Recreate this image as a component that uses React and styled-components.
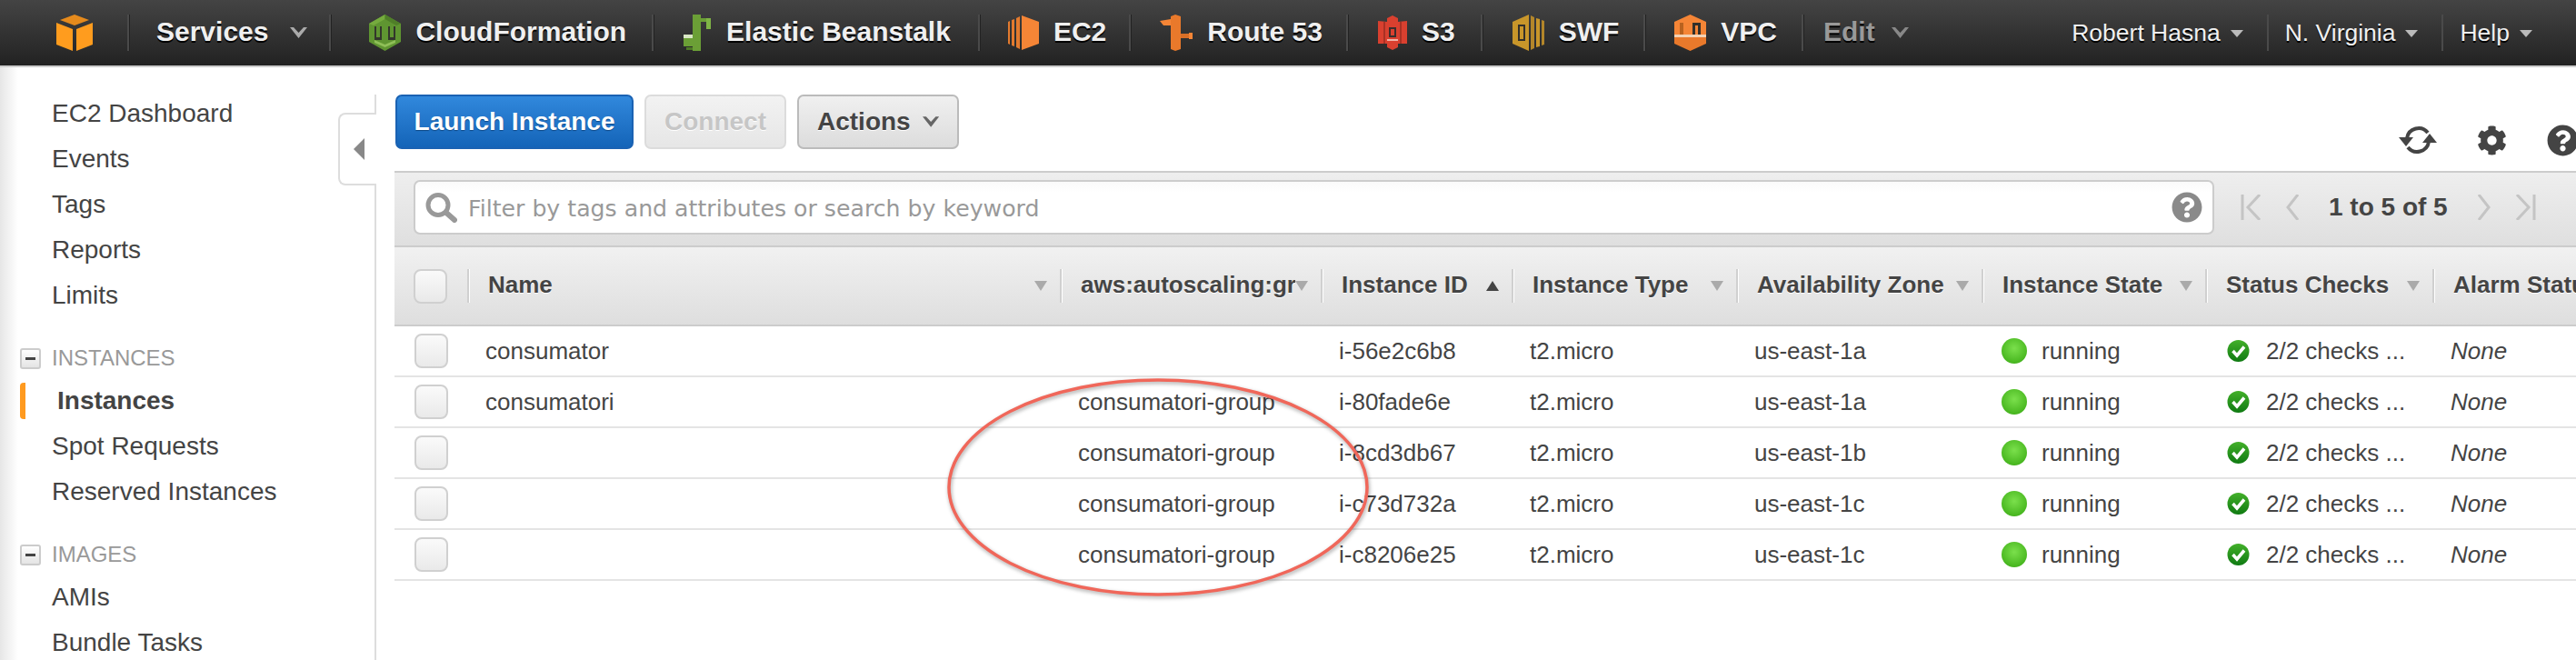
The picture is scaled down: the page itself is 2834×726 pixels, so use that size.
import React from 'react';
import styled, { createGlobalStyle } from 'styled-components';
import { FaCog, FaQuestionCircle } from 'react-icons/fa';

const GlobalStyle = createGlobalStyle`
  html, body {
    margin: 0;
    padding: 0;
    height: 100%;
    overflow: hidden;
    background: #fff;
  }
  body {
    font-family: "Liberation Sans", Arial, sans-serif;
    color: #444;
  }
`;

const rows = [
  { name: 'consumator', group: '', id: 'i-56e2c6b8', zone: 'us-east-1a' },
  { name: 'consumatori', group: 'consumatori-group', id: 'i-80fade6e', zone: 'us-east-1a' },
  { name: '', group: 'consumatori-group', id: 'i-8cd3db67', zone: 'us-east-1b' },
  { name: '', group: 'consumatori-group', id: 'i-c73d732a', zone: 'us-east-1c' },
  { name: '', group: 'consumatori-group', id: 'i-c8206e25', zone: 'us-east-1c' }
];

const columns = [
  { label: 'Name' },
  { label: 'aws:autoscaling:group' },
  { label: 'Instance ID', sorted: true },
  { label: 'Instance Type' },
  { label: 'Availability Zone' },
  { label: 'Instance State' },
  { label: 'Status Checks' },
  { label: 'Alarm Status' }
];

const COLUMNS = '80px 652px 287px 210px 247px 270px 246px 250px 300px';

/* Service icons */
const AwsLogo = () => (
  <svg width="40" height="40" viewBox="0 0 40 40">
    <polygon points="20,0 36,6 20,12 4,6" fill="#e58a1c" />
    <polygon points="0,9 18,16 18,40 0,33" fill="#ff9c1e" />
    <polygon points="40,9 22,16 22,40 40,33" fill="#ff9c1e" />
  </svg>
);

const CloudFormationIcon = () => (
  <svg width="35" height="40" viewBox="0 0 35 40">
    <polygon points="17.5,0 35,10 35,30 17.5,40 0,30 0,10" fill="#5f9531" />
    <polygon points="17.5,0 17.5,5 5,12 0,10" fill="#75ab3e" />
    <polygon points="17.5,0 17.5,5 30,12 35,10" fill="#4f7f28" />
    <rect x="6" y="13" width="8" height="15" fill="#33372c" />
    <rect x="21" y="13" width="8" height="15" fill="#33372c" />
    <rect x="8" y="13" width="4" height="12" fill="#5f9531" />
    <rect x="23" y="13" width="4" height="12" fill="#5f9531" />
    <polygon points="6,28 17.5,33 29,28 29,31 17.5,36 6,31" fill="#8fbf58" />
  </svg>
);

const BeanstalkIcon = () => (
  <svg width="32" height="40" viewBox="0 0 32 40">
    <rect x="11" y="0" width="9" height="40" fill="#6b9f36" />
    <rect x="20" y="4" width="6" height="4" fill="#6b9f36" />
    <rect x="26" y="4" width="5" height="12" fill="#7fb446" />
    <rect x="1" y="22" width="10" height="5" fill="#d8e6c4" />
    <rect x="1" y="26" width="10" height="9" fill="#6b9f36" />
    <rect x="4" y="36" width="7" height="3" fill="#4e7a26" />
  </svg>
);

const Ec2Icon = () => (
  <svg width="34" height="38" viewBox="0 0 34 38">
    <polygon points="15,0 34,7 34,31 15,38" fill="#f58536" />
    <polygon points="9,3 13,1 13,37 9,35" fill="#e37a2e" />
    <polygon points="4,5 7,4 7,34 4,33" fill="#e37a2e" />
    <polygon points="0,7 2,6 2,32 0,31" fill="#e37a2e" />
  </svg>
);

const Route53Icon = () => (
  <svg width="36" height="40" viewBox="0 0 36 40">
    <polygon points="0,7 12,5 12,12 4,12" fill="#f58536" />
    <polygon points="12,2 17,0 23,2 23,38 17,40 12,38" fill="#e9792b" />
    <rect x="23" y="21" width="12" height="5" fill="#d86f27" />
    <rect x="32" y="20" width="4" height="7" fill="#f58536" />
  </svg>
);

const S3Icon = () => (
  <svg width="32" height="38" viewBox="0 0 32 38">
    <polygon points="16,0 22,3 22,7 32,6 32,31 22,31 22,35 16,38 10,35 10,31 0,31 0,6 10,7 10,3" fill="#d9402f" />
    <rect x="12" y="13" width="8" height="11" fill="#3a2e2c" />
    <rect x="14" y="15" width="4" height="7" fill="#d9402f" />
    <rect x="10" y="26" width="12" height="2" fill="#f0b3a8" />
    <rect x="6" y="7" width="2" height="24" fill="#a93124" />
    <rect x="24" y="7" width="2" height="24" fill="#a93124" />
  </svg>
);

const SwfIcon = () => (
  <svg width="35" height="40" viewBox="0 0 35 40">
    <polygon points="0,8 18,0 18,40 0,32" fill="#c8962a" />
    <rect x="6" y="11" width="8" height="18" fill="#33302a" />
    <rect x="8" y="13" width="4" height="14" fill="#c8962a" />
    <polygon points="20,1 24,3 24,37 20,39" fill="#b3862a" />
    <polygon points="26,4 30,5 30,35 26,36" fill="#c8962a" />
    <polygon points="32,6 35,7 35,33 32,34" fill="#b3862a" />
  </svg>
);

const VpcIcon = () => (
  <svg width="35" height="40" viewBox="0 0 35 40">
    <polygon points="17.5,0 35,8 35,22 0,22 0,8" fill="#f58536" />
    <rect x="6" y="9" width="4" height="13" fill="#b9621f" />
    <rect x="20" y="9" width="9" height="13" fill="#33302a" />
    <rect x="23" y="12" width="3" height="10" fill="#f58536" />
    <rect x="0" y="22" width="35" height="3" fill="#f3d2b4" />
    <polygon points="0,25 35,25 35,32 17.5,40 0,32" fill="#e9792b" />
  </svg>
);

const RefreshIcon = () => (
  <svg width="42" height="36" viewBox="0 0 42 36" fill="none">
    <path d="M9 16 A13 13 0 0 1 32 10" stroke="#444" strokeWidth="4" />
    <path d="M33 20 A13 13 0 0 1 10 26" stroke="#444" strokeWidth="4" />
    <polygon points="0,15 16,15 8,25" fill="#444" />
    <polygon points="26,21 42,21 34,11" fill="#444" />
  </svg>
);

const SearchIcon = () => (
  <svg width="35" height="33" viewBox="0 0 35 33" fill="none">
    <circle cx="14" cy="13.5" r="11" stroke="#999" strokeWidth="5" />
    <path d="M23 22 L32 30" stroke="#999" strokeWidth="6" strokeLinecap="round" />
  </svg>
);

const CheckBadge = () => (
  <svg width="25" height="24" viewBox="0 0 25 24">
    <defs>
      <linearGradient id="badge" x1="0" y1="0" x2="0" y2="1">
        <stop offset="0" stopColor="#43b02a" />
        <stop offset="1" stopColor="#0f7a12" />
      </linearGradient>
    </defs>
    <circle cx="12.5" cy="12" r="12" fill="url(#badge)" />
    <path d="M6.5 12 L11 17 L19 7.5" fill="none" stroke="#fff" strokeWidth="3.5" />
  </svg>
);

const PagerIcon = ({ d, width }) => (
  <svg width={width} height="28" viewBox={`0 0 ${width} 28`} fill="none">
    <path d={d} stroke="#c4c4c4" strokeWidth="3" />
  </svg>
);

const ChevronDown = ({ color }) => (
  <svg width="19" height="12" viewBox="0 0 19 12">
    <polygon points="0,0 4,0 9.5,6 15,0 19,0 9.5,12" fill={color} />
  </svg>
);

const App = () => (
  <>
    <GlobalStyle />
    <Page>
      <TopNav>
        <LogoItem>
          <AwsLogo />
        </LogoItem>
        <NavItem $left={30} $right={24} $gap={24}>
          <NavLabel>Services</NavLabel>
          <ChevronDown color="#aaa" />
        </NavItem>
        <NavItem $left={42} $right={28}>
          <CloudFormationIcon />
          <NavLabel>CloudFormation</NavLabel>
        </NavItem>
        <NavItem $left={32} $right={30}>
          <BeanstalkIcon />
          <NavLabel>Elastic Beanstalk</NavLabel>
        </NavItem>
        <NavItem $left={31} $right={25}>
          <Ec2Icon />
          <NavLabel>EC2</NavLabel>
        </NavItem>
        <NavItem $left={32} $right={26}>
          <Route53Icon />
          <NavLabel>Route 53</NavLabel>
        </NavItem>
        <NavItem $left={33} $right={28}>
          <S3Icon />
          <NavLabel>S3</NavLabel>
        </NavItem>
        <NavItem $left={33} $right={27}>
          <SwfIcon />
          <NavLabel>SWF</NavLabel>
        </NavItem>
        <NavItem $left={32} $right={27}>
          <VpcIcon />
          <NavLabel>VPC</NavLabel>
        </NavItem>
        <NavItem $left={22} $right={0} $gap={18}>
          <NavLabel $muted>Edit</NavLabel>
          <ChevronDown color="#888" />
        </NavItem>
        <UserMenu>
          <UserItem $plain>
            Robert Hasna
            <SmallCaret />
          </UserItem>
          <UserItem>
            N. Virginia
            <SmallCaret />
          </UserItem>
          <UserItem>
            Help
            <SmallCaret />
          </UserItem>
        </UserMenu>
      </TopNav>

      <Body>
        <Sidebar>
          <SideLink>EC2 Dashboard</SideLink>
          <SideLink>Events</SideLink>
          <SideLink>Tags</SideLink>
          <SideLink>Reports</SideLink>
          <SideLink>Limits</SideLink>
          <SideSection>
            <MinusBox />
            INSTANCES
          </SideSection>
          <SideLink $active>Instances</SideLink>
          <SideLink>Spot Requests</SideLink>
          <SideLink>Reserved Instances</SideLink>
          <SideSection>
            <MinusBox />
            IMAGES
          </SideSection>
          <SideLink>AMIs</SideLink>
          <SideLink>Bundle Tasks</SideLink>
          <CollapseTab>
            <CollapseArrow />
          </CollapseTab>
        </Sidebar>

        <Main>
          <ActionBar>
            <LaunchButton>Launch Instance</LaunchButton>
            <ConnectButton>Connect</ConnectButton>
            <ActionsButton>
              Actions
              <ChevronDown color="#666" />
            </ActionsButton>
            <ToolIcons>
              <RefreshIcon />
              <FaCog size={33} color="#444" />
              <FaQuestionCircle size={35} color="#444" />
            </ToolIcons>
          </ActionBar>

          <FilterBand>
            <FilterBox>
              <SearchIcon />
              <FilterText>Filter by tags and attributes or search by keyword</FilterText>
              <FaQuestionCircle size={34} color="#8a8a8a" />
            </FilterBox>
            <Pager>
              <PagerIcon width={22} d="M2 0 V28 M21 0 L8 14 L21 28" />
              <PagerGap />
              <PagerIcon width={14} d="M13 0 L2 14 L13 28" />
              <PagerCount>1 to 5 of 5</PagerCount>
              <PagerIcon width={14} d="M1 0 L12 14 L1 28" />
              <PagerGap />
              <PagerIcon width={22} d="M1 0 L14 14 L1 28 M20 0 V28" />
            </Pager>
          </FilterBand>

          <HeaderRow>
            <HeaderCheckCell>
              <CheckBox />
            </HeaderCheckCell>
            {columns.map(col => (
              <HeaderCell key={col.label}>
                <HeaderLabel>{col.label}</HeaderLabel>
                {col.sorted ? <SortUp /> : <HeaderCaret />}
              </HeaderCell>
            ))}
          </HeaderRow>

          {rows.map(row => (
            <Row key={row.id}>
              <CheckCell>
                <CheckBox />
              </CheckCell>
              <Cell>{row.name}</Cell>
              <Cell>{row.group}</Cell>
              <Cell>{row.id}</Cell>
              <Cell>t2.micro</Cell>
              <Cell>{row.zone}</Cell>
              <StateCell>
                <StatusDot />
                running
              </StateCell>
              <ChecksCell>
                <CheckBadge />
                2/2 checks ...
              </ChecksCell>
              <AlarmCell>None</AlarmCell>
            </Row>
          ))}

          <Annotation width="464" height="244" viewBox="0 0 464 244">
            <ellipse cx="232" cy="121" rx="230" ry="118" fill="none" stroke="#f0675a" strokeWidth="3.5" />
          </Annotation>
        </Main>
      </Body>
    </Page>
  </>
);

export default App;

const Page = styled.div`
  width: 2834px;
  height: 726px;
  overflow: hidden;
  display: flex;
  flex-direction: column;
`;

const TopNav = styled.nav`
  flex: none;
  height: 72px;
  display: flex;
  align-items: center;
  background: linear-gradient(#444, #222);
  border-bottom: 2px solid #ccc;
`;

const LogoItem = styled.div`
  width: 78px;
  padding-left: 62px;
  height: 40px;
  display: flex;
`;

const NavItem = styled.div`
  height: 40px;
  display: flex;
  align-items: center;
  gap: ${props => props.$gap || 16}px;
  padding: 0 ${props => props.$right}px 0 ${props => props.$left}px;
  border-left: 2px solid #4a4a4a;
  box-shadow: inset 1px 0 0 #222;
`;

const NavLabel = styled.span`
  margin-top: -2px;
  font-size: 30px;
  font-weight: bold;
  color: ${props => (props.$muted ? '#999' : '#f0f0f0')};
  text-shadow: 0 2px 0 #000;
`;

const UserMenu = styled.div`
  margin-left: auto;
  display: flex;
  padding-right: 48px;
`;

const UserItem = styled.div`
  height: 40px;
  display: flex;
  align-items: center;
  gap: 11px;
  padding: 0 26px 0 18px;
  font-size: 26.5px;
  color: #f0f0f0;
  text-shadow: 0 2px 0 #000;
  border-left: ${props => (props.$plain ? 'none' : '2px solid #4a4a4a')};

  &:last-child {
    padding-right: 0;
  }
`;

const SmallCaret = styled.span`
  width: 0;
  height: 0;
  border-left: 7px solid transparent;
  border-right: 7px solid transparent;
  border-top: 8px solid #bbb;
  margin-top: 2px;
`;

const Body = styled.div`
  flex: 1;
  display: flex;
  min-height: 0;
`;

const Sidebar = styled.aside`
  position: relative;
  flex: none;
  width: 414px;
  box-sizing: border-box;
  padding-top: 26px;
  background: linear-gradient(90deg, #e6e6e6, #fff 20px);

  &::after {
    content: '';
    position: absolute;
    top: 30px;
    bottom: 0;
    right: 0;
    width: 2px;
    background: #ddd;
  }
`;

const SideLink = styled.div`
  height: 50px;
  line-height: 50px;
  font-size: 28px;
  white-space: nowrap;
  color: #444;
  padding-left: ${props => (props.$active ? '35px' : '57px')};
  margin-left: ${props => (props.$active ? '22px' : '0')};
  font-weight: ${props => (props.$active ? 'bold' : 'normal')};
  border-left: ${props => (props.$active ? '6px solid #ff9a1f' : 'none')};
  border-radius: ${props => (props.$active ? '4px 0 0 4px' : '0')};
  ${props => props.$active && 'box-sizing: border-box; height: 40px; line-height: 40px; margin-top: 5px; margin-bottom: 5px;'}
`;

const SideSection = styled.div`
  height: 44px;
  margin-top: 22px;
  padding-left: 22px;
  display: flex;
  align-items: center;
  gap: 12px;
  font-size: 24px;
  color: #999;
`;

const MinusBox = styled.span`
  position: relative;
  width: 23px;
  height: 23px;
  box-sizing: border-box;
  border: 2px solid #ccc;
  border-radius: 3px;
  background: linear-gradient(#fff, #e4e4e4);

  &::after {
    content: '';
    position: absolute;
    left: 4px;
    right: 4px;
    top: 8px;
    height: 3px;
    background: #444;
  }
`;

const CollapseTab = styled.div`
  position: absolute;
  z-index: 1;
  top: 50px;
  right: 0;
  width: 42px;
  height: 80px;
  box-sizing: border-box;
  display: flex;
  align-items: center;
  padding-left: 15px;
  background: #fff;
  border: 2px solid #ddd;
  border-right: none;
  border-radius: 8px 0 0 8px;
`;

const CollapseArrow = styled.span`
  width: 0;
  height: 0;
  border-top: 12px solid transparent;
  border-bottom: 12px solid transparent;
  border-right: 12px solid #888;
`;

const Main = styled.main`
  position: relative;
  flex: 1;
  min-width: 0;
  padding-left: 20px;
`;

const ActionBar = styled.div`
  height: 114px;
  box-sizing: border-box;
  padding: 30px 0 0 1px;
  display: flex;
  align-items: flex-start;
  gap: 12px;
`;

const BaseButton = styled.button`
  height: 60px;
  box-sizing: border-box;
  border-radius: 7px;
  border: 2px solid #bbb;
  font-family: inherit;
  font-size: 28px;
  font-weight: bold;
  display: flex;
  align-items: center;
`;

const LaunchButton = styled(BaseButton)`
  width: 262px;
  justify-content: center;
  color: #fff;
  border-color: #1a62b3;
  background: linear-gradient(#3188dc, #1464b8);
  text-shadow: 0 1px 1px #0c4684;
`;

const ConnectButton = styled(BaseButton)`
  width: 156px;
  justify-content: center;
  color: #c6c6c6;
  border-color: #dcdcdc;
  background: linear-gradient(#f2f2f2, #e6e6e6);
  text-shadow: 0 1px 0 #fff;
`;

const ActionsButton = styled(BaseButton)`
  width: 178px;
  padding: 0 20px;
  gap: 13px;
  color: #444;
  background: linear-gradient(#f0f0f0, #dcdcdc);
  text-shadow: 0 1px 0 #fff;
`;

const ToolIcons = styled.div`
  flex: none;
  margin-left: auto;
  margin-top: 32px;
  margin-right: -3px;
  display: flex;
  align-items: center;
  gap: 44px;
`;

const FilterBand = styled.div`
  height: 84px;
  box-sizing: border-box;
  padding: 8px 0 0 21px;
  display: flex;
  background: linear-gradient(#eee, #dfdfdf);
  border-top: 2px solid #ccc;
  border-bottom: 2px solid #ccc;
`;

const FilterBox = styled.div`
  flex: none;
  width: 1981px;
  height: 60px;
  box-sizing: border-box;
  padding: 0 11px 0 11px;
  display: flex;
  align-items: center;
  gap: 12px;
  background: linear-gradient(#fafafa, #fff 12px);
  border: 2px solid #ccc;
  border-radius: 7px;
`;

const FilterText = styled.span`
  flex: 1;
  padding-top: 3px;
  font-family: "DejaVu Sans", "Liberation Sans", sans-serif;
  font-size: 25.2px;
  color: #999;
`;

const Pager = styled.div`
  height: 60px;
  padding-left: 29px;
  display: flex;
  align-items: center;
`;

const PagerGap = styled.span`
  width: 28px;
`;

const PagerCount = styled.span`
  width: 131px;
  margin: 0 33px;
  font-size: 28px;
  font-weight: bold;
  white-space: nowrap;
  color: #444;
`;

const HeaderRow = styled.div`
  height: 87px;
  box-sizing: border-box;
  display: grid;
  grid-template-columns: ${COLUMNS};
  align-items: center;
  background: linear-gradient(#f1f1f1, #dedede);
  border-bottom: 2px solid #ccc;
`;

const HeaderCheckCell = styled.div`
  padding-left: 21px;
`;

const HeaderCell = styled.div`
  height: 37px;
  min-width: 0;
  box-sizing: border-box;
  display: flex;
  align-items: center;
  padding: 0 14px 0 21px;
  border-left: 2px solid #d0d0d0;
  box-shadow: inset 1px 0 0 #fff;
`;

const HeaderLabel = styled.span`
  flex: 1;
  min-width: 0;
  overflow: hidden;
  white-space: nowrap;
  margin-top: -3px;
  font-size: 26px;
  font-weight: bold;
  color: #444;
  text-shadow: 0 1px 0 #fff;
`;

const HeaderCaret = styled.span`
  flex: none;
  width: 0;
  height: 0;
  border-left: 7px solid transparent;
  border-right: 7px solid transparent;
  border-top: 11px solid #aaa;
`;

const SortUp = styled.span`
  flex: none;
  width: 0;
  height: 0;
  border-left: 7px solid transparent;
  border-right: 7px solid transparent;
  border-bottom: 11px solid #444;
`;

const Row = styled.div`
  height: 56px;
  box-sizing: border-box;
  display: grid;
  grid-template-columns: ${COLUMNS};
  align-items: center;
  border-bottom: 2px solid #e4e4e4;
`;

const CheckCell = styled.div`
  padding-left: 22px;
  display: flex;
`;

const CheckBox = styled.span`
  display: block;
  width: 37px;
  height: 38px;
  box-sizing: border-box;
  border: 2px solid #d0d0d0;
  border-radius: 8px;
  background: linear-gradient(#fafafa, #e9e9e9);
`;

const Cell = styled.div`
  padding-left: 20px;
  font-size: 26px;
  white-space: nowrap;
  color: #444;
`;

const StateCell = styled(Cell)`
  display: flex;
  align-items: center;
  gap: 16px;
  padding-left: 22px;
`;

const ChecksCell = styled(Cell)`
  display: flex;
  align-items: center;
  gap: 18px;
  padding-left: 24px;
`;

const AlarmCell = styled(Cell)`
  font-style: italic;
`;

const StatusDot = styled.span`
  width: 28px;
  height: 28px;
  border-radius: 50%;
  background: radial-gradient(circle at 50% 40%, #7be04c, #4dbb24 65%, #35a214);
`;

const Annotation = styled.svg`
  position: absolute;
  left: 628px;
  top: 341px;
  filter: drop-shadow(1px 2px 2px rgba(0, 0, 0, 0.35));
  pointer-events: none;
`;
